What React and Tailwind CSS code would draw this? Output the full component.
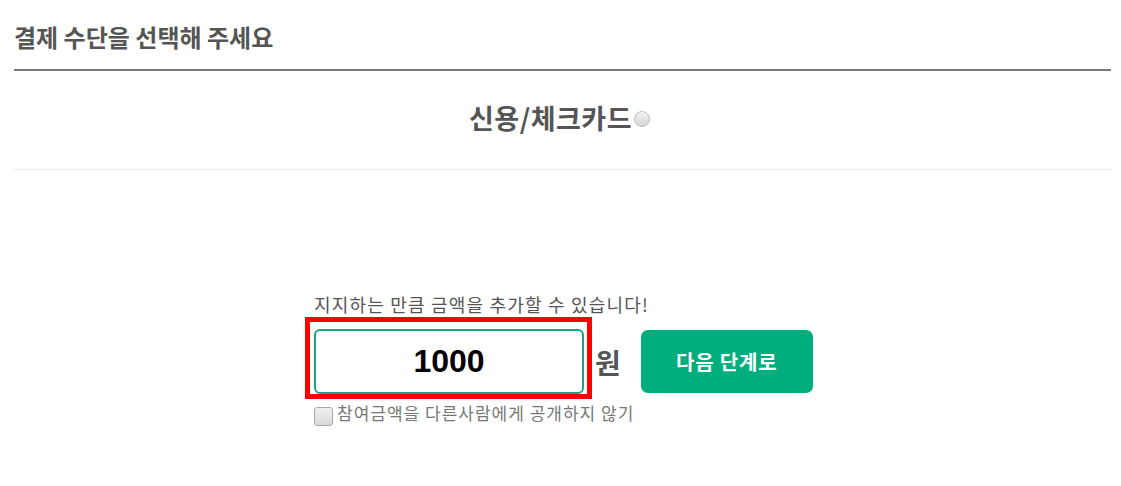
import { useState } from 'react';

const font = { fontFamily: '"Noto Sans CJK KR", "Noto Sans", sans-serif' };

const App = () => {
  const [amount, setAmount] = useState('1000');
  const [hidden, setHidden] = useState(false);

  return (
    <div className="w-[1121px] h-[486px] bg-white pl-[14px] pr-[10px] pt-[20px]" style={font}>
      {/* Heading */}
      <div className="border-b-2 border-[#7a7a7a] pb-[15px]">
        <h2 className="text-[24px] leading-[34px] font-bold text-[#555]">
          결제 수단을 선택해 주세요
        </h2>
      </div>

      {/* Payment method */}
      <div className="h-[99px] border-b border-[#e8e8e8] flex items-center justify-center">
        <label className="flex items-center gap-[2px] cursor-pointer -mt-[5px] -ml-[6px]">
          <span className="text-[27px] leading-[34px] font-bold text-[#555] tracking-[0.5px]">신용/체크카드</span>
          <span className="w-[16px] h-[16px] rounded-full border border-[#bdbdbd] bg-gradient-to-b from-[#f2f2f2] to-[#d6d6d6] mt-[2px]" />
        </label>
      </div>

      {/* Amount */}
      <div className="pt-[122px] pl-[300px]">
        <p className="text-[18px] leading-[24px] text-[#555] tracking-[1.2px]">
          지지하는 만큼 금액을 추가할 수 있습니다!
        </p>
        <div className="flex items-center mt-[13px]">
          <div className="relative">
            <input
              value={amount}
              onChange={(e) => setAmount(e.target.value)}
              className="w-[270px] h-[65px] rounded-[6px] border-2 border-[#19a67f] text-center text-[32px] font-bold text-black outline-none"
              style={{ fontFamily: '"Liberation Sans", Arial, sans-serif' }}
            />
            <div className="absolute -left-[9px] -top-[12px] w-[287px] h-[82px] border-[5px] border-[#ff0000] pointer-events-none" />
          </div>
          <span className="ml-[11px] text-[28px] font-bold text-[#555] leading-none">원</span>
          <button className="ml-[20px] w-[172px] h-[63px] rounded-[7px] bg-[#00ad7c] text-white text-[20px] font-bold tracking-[0.8px]">
            다음 단계로
          </button>
        </div>
        <label className="flex items-center gap-[4px] mt-[13px] cursor-pointer">
          <span
            onClick={() => setHidden(!hidden)}
            className="w-[19px] h-[19px] rounded-[3px] border border-[#a9a9a9] bg-gradient-to-b from-[#f0f0f0] to-[#d9d9d9] flex items-center justify-center text-[12px] text-[#555]"
          >
            {hidden ? '✓' : ''}
          </span>
          <span className="text-[17px] leading-[20px] text-[#777] tracking-[1px] -mt-[8px]">
            참여금액을 다른사람에게 공개하지 않기
          </span>
        </label>
      </div>
    </div>
  );
};

export default App;
